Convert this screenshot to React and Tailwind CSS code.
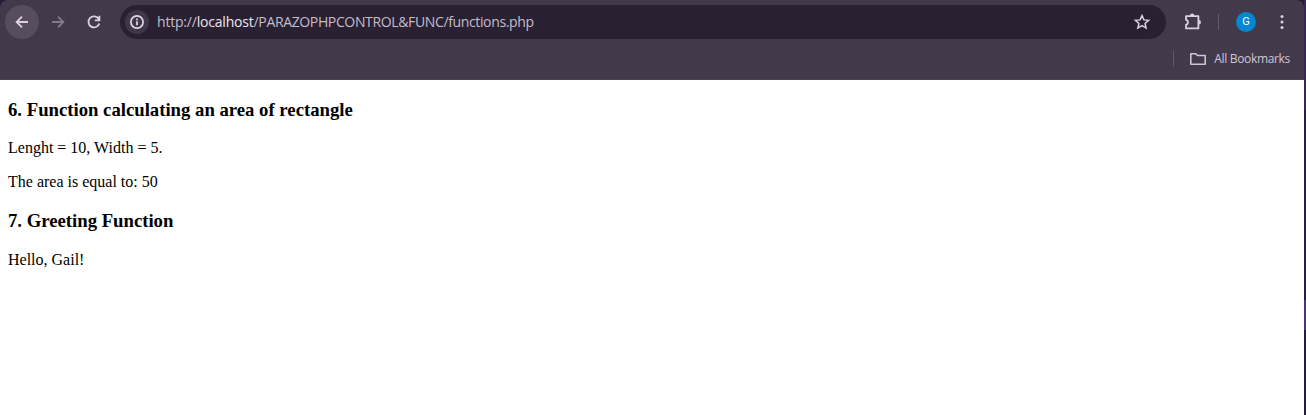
import React from "react";

function Stroke({ className, width = 1.8, children }) {
  return (
    <svg viewBox="0 0 20 20" className={className} fill="none" stroke="currentColor" strokeWidth={width}>
      {children}
    </svg>
  );
}

function NavButtons() {
  return (
    <div className="flex items-center text-[#dcd0e2]">
      <div className="flex size-[34px] items-center justify-center rounded-full bg-[#574d5e]">
        <Stroke className="size-5">
          <path d="M16 10H5M10 4.6L4.6 10l5.4 5.4" />
        </Stroke>
      </div>
      <Stroke className="ml-[9px] size-5 text-[#857a8b]">
        <path d="M4 10h11M10 4.6l5.4 5.4-5.4 5.4" />
      </Stroke>
      <Stroke className="ml-4 size-5">
        <path d="M14.8 7.2A5.5 5.5 0 1 0 15.3 11.4M15.4 3.8v4.5h-4.6" />
      </Stroke>
    </div>
  );
}

function AddressBar() {
  return (
    <div className="ml-4 flex h-[34px] flex-1 items-center rounded-full bg-[#292132] pl-[5px] pr-[14px]">
      <div className="flex size-6 items-center justify-center rounded-full bg-[#403748] text-[#e2d8e8]">
        <Stroke className="size-5" width={1.7}>
          <circle cx="10" cy="10" r="6.1" />
          <path d="M10 9.2v4M10 6.6v1.6" />
        </Stroke>
      </div>
      <div className="ml-2 whitespace-nowrap font-['Open_Sans',sans-serif] text-[14px] leading-5 tracking-[-0.36px] text-[#c5bccb]">
        <span className="tracking-[-0.2px]">
          http://<span className="text-[#ece6f0]">localhost</span>
        </span>
        /PARAZOPHPCONTROL&amp;FUNC/functions.php
      </div>
      <Stroke className="ml-auto size-5 text-[#dcd0e2]" width={1.5}>
        <path d="M10 3.6l1.9 4.3 4.7.45-3.55 3.1 1.05 4.6L10 13.6l-4.1 2.45 1.05-4.6L3.4 8.35l4.7-.45z" />
      </Stroke>
    </div>
  );
}

function BrowserChrome() {
  return (
    <header className="h-20 rounded-t-lg border-b border-[#4b4252] bg-[#42394a] pt-[5px]">
      <div className="flex h-[34px] items-center pl-[5px] pr-3">
        <NavButtons />
        <AddressBar />
        <svg viewBox="0 0 22 22" className="ml-4 size-[22px] text-[#dcd0e2]">
          <path
            d="M4 5.2h12.4v12.2H4v-3.6c2.6-.4 2.6-4.6 0-5z"
            fill="none"
            stroke="currentColor"
            strokeWidth="1.8"
            strokeLinejoin="round"
          />
          <path d="M8 5a2.2 2.4 0 0 1 4.4 0zM16.6 9a2.4 2.2 0 0 1 0 4.4z" fill="currentColor" />
        </svg>
        <div className="ml-[14px] h-4 w-px bg-[#62586a]" />
        <div className="ml-[17px] flex size-5 items-center justify-center rounded-full bg-[#0288d1] pt-px font-[Roboto,sans-serif] text-[11px] text-white">
          G
        </div>
        <svg viewBox="0 0 20 20" className="ml-4 size-5 fill-[#dcd0e2]">
          <circle cx="10" cy="4.5" r="1.5" />
          <circle cx="10" cy="10" r="1.5" />
          <circle cx="10" cy="15.5" r="1.5" />
        </svg>
      </div>
      <div className="flex h-10 items-center justify-end pr-[14px]">
        <div className="h-4 w-px bg-[#62586a]" />
        <Stroke className="ml-[14px] size-5 text-[#cfc4d5]" width={1.6}>
          <path d="M2.8 4.7h4.9l1.8 1.8h7.7v8.8H2.8z" strokeLinejoin="round" />
        </Stroke>
        <span className="ml-[6px] whitespace-nowrap font-['Open_Sans',sans-serif] text-[12px] tracking-[-0.33px] text-[#d0c6d6]">
          All Bookmarks
        </span>
      </div>
    </header>
  );
}

export default function App() {
  return (
    <div className="flex h-[415px] w-full overflow-hidden bg-[#251c38]">
      <div className="flex min-w-0 flex-1 flex-col">
        <BrowserChrome />
        <main className="flex-1 bg-white px-2 font-['Liberation_Serif',serif] text-[16px] leading-[18px] text-black">
          <h3 className="mt-[19px] text-[18.72px] font-bold leading-[22px]">6. Function calculating an area of rectangle</h3>
          <p className="mt-[18px]">Lenght = 10, Width = 5.</p>
          <p className="mt-4">The area is equal to: 50</p>
          <h3 className="mt-[19px] text-[18.72px] font-bold leading-[22px]">7. Greeting Function</h3>
          <p className="mt-[19px]">Hello, Gail!</p>
        </main>
      </div>
      <div className="flex w-[2px] flex-col">
        <div className="h-[110px] bg-[#3a2358]" />
        <div className="h-[190px] bg-[#2a1c4a]" />
        <div className="h-[30px] bg-[#4b3383]" />
        <div className="flex-1 bg-[#241a44]" />
      </div>
    </div>
  );
}
